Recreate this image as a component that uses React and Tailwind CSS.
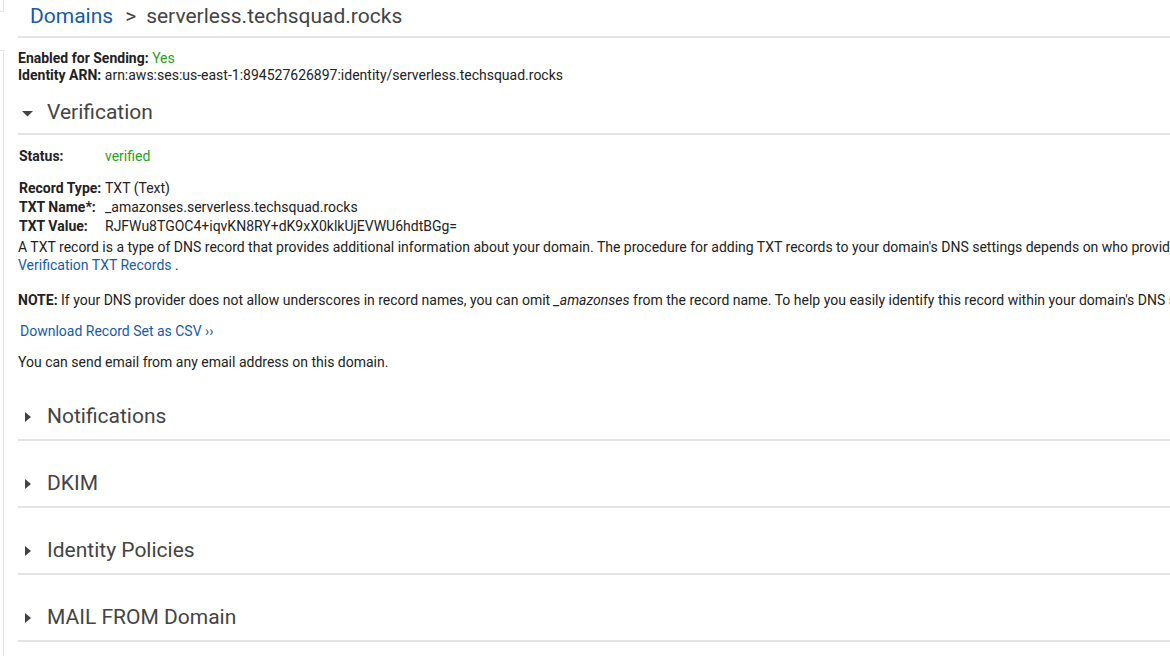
export default function App() {
  const font = { fontFamily: 'Roboto, "Liberation Sans", Arial, sans-serif' };
  const Section = ({ title, open, first }) => (
    <div className={`flex items-center ${first ? "pt-[15px] pb-[8px]" : "pt-[29px] pb-[10px]"} border-b-2 border-[#e4e4e4]`}>
      <div className="w-[29px] h-[26px] flex items-center">
        {open ? (
          <svg width="11" height="6" viewBox="0 0 11 6" className="ml-[4px] mt-[3px]">
            <polygon points="0,0 11,0 5.5,5.5" fill="#444" />
          </svg>
        ) : (
          <svg width="6" height="10" viewBox="0 0 6 10" className="ml-[7px] mt-[1px]">
            <polygon points="0,0 6,5 0,10" fill="#444" />
          </svg>
        )}
      </div>
      <span className="text-[21px] leading-[26px] text-[#444]">{title}</span>
    </div>
  );
  return (
    <div style={font} className="w-[1170px] h-[656px] overflow-hidden bg-white flex text-[14px] text-[#222]">
      <div className="w-[18px] shrink-0 flex flex-col">
        <div className="w-[4px] h-[12px] border-r border-b border-[#e6e6e6]" />
        <div className="w-[4px] mt-[38px] flex-1 border-r border-t border-[#e6e6e6]" />
      </div>
      <div className="flex-1 min-w-[1300px]">
        <div className="h-[38px] pt-[3px] pl-[12px] border-b-2 border-[#e4e4e4] flex text-[21px] leading-[26px] text-[#444] whitespace-nowrap">
          <span className="text-[#175aa8]">Domains</span>
          <span className="ml-[12px] mr-[10px]">&gt;</span>
          <span>serverless.techsquad.rocks</span>
        </div>
        <div className="mt-[12px] leading-[17px] whitespace-nowrap">
          <div><b className="font-bold">Enabled for Sending:</b> <span className="text-[#26a026]">Yes</span></div>
          <div><b className="font-bold">Identity ARN:</b> arn:aws:ses:us-east-1:894527626897:identity/serverless.techsquad.rocks</div>
        </div>
        <Section title="Verification" open first />
        <div className="mt-[13px] flex leading-[17px] pl-[1px]">
          <span className="w-[86px] font-bold">Status:</span>
          <span className="text-[#26a026]">verified</span>
        </div>
        <div className="mt-[14px] leading-[19px] pl-[1px] whitespace-nowrap">
          <div className="flex"><span className="w-[86px] font-bold">Record Type:</span><span>TXT (Text)</span></div>
          <div className="flex"><span className="w-[86px] font-bold">TXT Name*:</span><span>_amazonses.serverless.techsquad.rocks</span></div>
          <div className="flex"><span className="w-[86px] font-bold">TXT Value:</span><span>RJFWu8TGOC4+iqvKN8RY+dK9xX0klkUjEVWU6hdtBGg=</span></div>
        </div>
        <div className="mt-[2px] leading-[18px] whitespace-nowrap">
          <div>A TXT record is a type of DNS record that provides additional information about your domain. The procedure for adding TXT records to your domain's DNS settings depends on who provides your DNS service.</div>
          <div><span className="text-[#175aa8]">Verification TXT Records</span> .</div>
        </div>
        <div className="mt-[17px] leading-[18px] whitespace-nowrap">
          <b className="font-bold">NOTE:</b> If your DNS provider does not allow underscores in record names, you can omit <i>_amazonses</i> from the record name. To help you easily identify this record within your domain's DNS settings, you can optionally prefix the record value.
        </div>
        <div className="mt-[13px] leading-[18px] pl-[2px] text-[#175aa8]">Download Record Set as CSV ››</div>
        <div className="mt-[13px] leading-[18px]">You can send email from any email address on this domain.</div>
        <div className="mt-[3px]">
          <Section title="Notifications" />
          <Section title="DKIM" />
          <Section title="Identity Policies" />
          <Section title="MAIL FROM Domain" />
        </div>
      </div>
    </div>
  );
}
